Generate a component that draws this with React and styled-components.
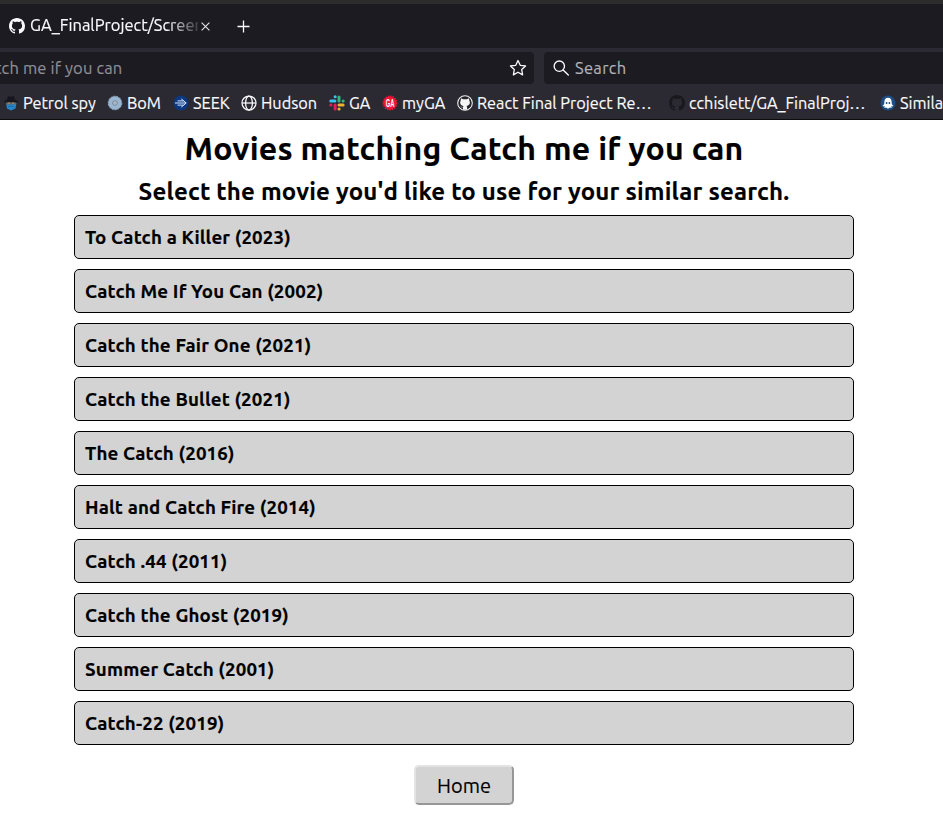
import React from "react";
import styled, { createGlobalStyle } from "styled-components";

const GlobalStyle = createGlobalStyle`
  * { box-sizing: border-box; }
  body { margin: 0; background: #fff; overflow: hidden; font-family: Ubuntu, "Noto Sans", sans-serif; }
  h1, h2, p { margin: 0; }
`;

const Text = styled.span`
  white-space: pre;
  letter-spacing: ${(p) => p.$spacing || 0}px;
`;

const Window = styled.div`
  width: 943px;
  height: 823px;
  overflow: hidden;
  background: #fff;
`;
const Chrome = styled.header`
  height: 120px;
  background: #2b2a33;
  border-bottom: 1px solid #0c0c0d;
  color: #fbfbfe;
  font-size: 16.5px;
  -webkit-text-stroke: 0.15px currentColor;
  overflow: hidden;
`;
const TabBar = styled.div`
  height: 48px;
  border-top: 4px solid #2c2c2c;
  background: #1c1b22;
  display: flex;
  align-items: center;
  padding-left: 9px;
`;
const TabTitle = styled.div`
  width: 168px;
  margin: -2px 3px 0 5px;
  line-height: 24px;
  overflow: hidden;
  mask-image: linear-gradient(to right, #000 136px, transparent 174px);
`;
const TabIcon = styled.svg`
  flex: none;
  margin-right: ${(p) => p.$gap || 0}px;
`;
const NavBar = styled.div`
  height: 36px;
  padding-top: 4px;
  display: flex;
  gap: 10px;
`;
const Field = styled.div`
  height: 32px;
  display: flex;
  align-items: center;
  background: #1c1b22;
  line-height: 31px;
`;
const AddressField = styled(Field)`
  width: 534px;
  border-radius: 0 4px 4px 0;
  justify-content: space-between;
  padding-right: 7px;
  color: #8f8f95;
`;
const AddressText = styled.div`
  margin-left: -5px;
`;
const SearchField = styled(Field)`
  flex: 1;
  border-radius: 4px 0 0 4px;
  padding-left: 8px;
  gap: 5px;
  color: #b3b3b8;
`;
const Bookmarks = styled.nav`
  height: 35px;
  display: flex;
  padding: 2px 0 0 3px;
  font-size: 16.3px;
`;
const Bookmark = styled.div`
  flex: none;
  width: ${(p) => p.$width}px;
  height: 34px;
  display: flex;
  align-items: center;
  gap: 4px;
  line-height: 34px;
  padding-bottom: 1px;
  svg { flex: none; }
`;
const Page = styled.main`
  width: 928px;
  display: flex;
  flex-direction: column;
  align-items: center;
  color: #000;
  -webkit-text-stroke: 0.15px currentColor;
`;
const Title = styled.h1`
  margin-top: 8px;
  font-size: 32px;
  line-height: 40px;
  height: 40px;
  letter-spacing: 0.22px;
`;
const Subtitle = styled.h2`
  margin-top: 9px;
  font-size: 24px;
  line-height: 30px;
  height: 30px;
  letter-spacing: 0.19px;
`;
const MovieList = styled.div`
  width: 780px;
  margin-top: 8px;
  display: flex;
  flex-direction: column;
  gap: 10px;
`;
const Movie = styled.div`
  height: 44px;
  border: 1px solid #000;
  border-radius: 5px;
  background: #d3d3d3;
  padding-left: 10px;
  font-size: 18.72px;
  font-weight: 700;
  line-height: 43px;
  letter-spacing: 0.16px;
`;
const HomeButton = styled.button`
  margin-top: 20px;
  width: 100px;
  height: 40px;
  padding: 2px 0 0;
  border: 2px solid;
  border-color: #e3e3e3 #979797 #979797 #e3e3e3;
  border-radius: 5px;
  background: #d3d3d3;
  color: #000;
  font-family: inherit;
  font-size: 20px;
  line-height: 34px;
`;

const OCTOCAT =
  "M8 0C3.58 0 0 3.58 0 8c0 3.54 2.29 6.53 5.47 7.59.4.07.55-.17.55-.38 0-.19-.01-.82-.01-1.49-2.01.37-2.53-.49-2.69-.94-.09-.23-.48-.94-.82-1.13-.28-.15-.68-.52-.01-.53.63-.01 1.08.58 1.23.82.72 1.21 1.87.87 2.33.66.07-.52.28-.87.51-1.07-1.78-.2-3.64-.89-3.64-3.95 0-.87.31-1.59.82-2.15-.08-.2-.36-1.02.08-2.12 0 0 .67-.21 2.2.82.64-.18 1.32-.27 2-.27s1.36.09 2 .27c1.53-1.04 2.2-.82 2.2-.82.44 1.1.16 1.92.08 2.12.51.56.82 1.27.82 2.15 0 3.07-1.87 3.75-3.65 3.95.29.25.54.73.54 1.48 0 1.07-.01 1.93-.01 2.2 0 .21.15.46.55.38A8.01 8.01 0 0 0 16 8c0-4.42-3.58-8-8-8z";

const Svg16 = (props) => <svg width="16" height="16" viewBox="0 0 16 16" fill="none" {...props} />;

const SpyIcon = () => (
  <Svg16>
    <path d="M3 8h10.5l-1 5.5L8 15.5 4 13.5z" fill="#2587c9" />
    <path d="M3.5 6.8h9v2.7h-9z" fill="#65635f" />
    <path d="M5 8h2M9 8h2" stroke="#c1a17c" />
    <path d="M4.2 4.5 5 1 8 1.8l3-.8.8 3.5 3 1.8v.9H1.2v-.9z" fill="#17151d" />
    <path d="m5 12 3-1 3 1" stroke="#1769a4" />
  </Svg16>
);
const BomIcon = () => (
  <Svg16>
    <circle cx="8" cy="8" r="6.8" fill="#9ab5cf" stroke="#8ba8c4" strokeDasharray="2 1" />
    <circle cx="8" cy="8" r="2.2" fill="#d3dce4" stroke="#677c91" />
    <circle cx="8" cy="8" r=".7" fill="#647487" />
  </Svg16>
);
const SeekIcon = () => (
  <Svg16>
    <circle cx="8" cy="8" r="7.5" fill="#0d3880" />
    <path d="M2 8h11M4.5 5.9h6M4.5 10.1h6M8.2 3.8 13.2 8l-5 4.2" stroke="#d8e8ff" strokeWidth="1" />
  </Svg16>
);
const GlobeIcon = () => (
  <Svg16 stroke="#fbfbfe" strokeWidth="1.25">
    <circle cx="8" cy="8" r="7" />
    <ellipse cx="8" cy="8" rx="3.4" ry="7" />
    <path d="M1.2 8h13.6" />
  </Svg16>
);
const SlackIcon = () => (
  <Svg16 strokeWidth="3" strokeLinecap="round">
    <path d="M1.8 6.1h4.1M6.1 1.8h.1" stroke="#36c5f0" />
    <path d="M10 1.9v4.2M14.1 6.1h.1" stroke="#2eb67d" />
    <path d="M10 10h4.1M10 14.1h.1" stroke="#ecb22e" />
    <path d="M6.1 10v4.1M1.8 10h.1" stroke="#e01e5a" />
  </Svg16>
);
const BadgeText = styled.text`
  font: 700 11px "Liberation Sans", sans-serif;
`;
const MyGaIcon = () => (
  <Svg16>
    <circle cx="8" cy="8" r="6.5" fill="#ed1837" stroke="#ed1837" strokeWidth="2" strokeDasharray="1.3 1" />
    <BadgeText x="3.7" y="12" fill="#fff" textLength="8.6" lengthAdjust="spacingAndGlyphs">GA</BadgeText>
  </Svg16>
);
const RingCatIcon = () => (
  <Svg16>
    <circle cx="8" cy="8" r="7.3" fill="#25242a" stroke="#f1f1f1" strokeWidth="1.1" />
    <path d="M4 3.2 6.2 4.2h3.6L12 3.2l.3 2.4c1.6 3-.2 5-2.8 5.5l.6 1v2.6H6v-2C4.3 13 4.2 11.7 3.3 11.3c1.2-.2 1.6 1.4 2.7 1.1l.4-1.3C3.8 10.6 2.3 8.4 3.7 5.6z" fill="#f6f6f6" />
  </Svg16>
);
const DarkCatIcon = () => (
  <Svg16><path d={OCTOCAT} fill="#19181d" /></Svg16>
);
const OctopusIcon = () => (
  <Svg16>
    <circle cx="8" cy="8" r="7.5" fill="#1c4f86" />
    <path d="M4.3 7.5C4.3 4.5 5.5 2.8 8 2.8s3.7 1.7 3.7 4.7c0 2 .5 2.5 1.7 3.1-.6 1-1.5 1-2.3.5l.6 2-1.8-.6L8 13.8l-1.9-1.3-1.8.6.6-2c-.9.5-1.8.5-2.3-.5 1.2-.6 1.7-1.1 1.7-3.1z" fill="#fff" />
    <circle cx="6.6" cy="8" r=".9" fill="#164779" />
    <circle cx="9.4" cy="8" r=".9" fill="#164779" />
  </Svg16>
);

const bookmarks = [
  { label: "Petrol spy", width: 104, Icon: SpyIcon },
  { label: "BoM", width: 66, Icon: BomIcon },
  { label: "SEEK", width: 68, Icon: SeekIcon },
  { label: "Hudson", width: 88, Icon: GlobeIcon },
  { label: "GA", width: 53, Icon: SlackIcon },
  { label: "myGA", width: 75, Icon: MyGaIcon },
  { label: "React Final Project Re…", width: 212, Icon: RingCatIcon },
  { label: "cchislett/GA_FinalProj…", width: 211, Icon: DarkCatIcon },
  { label: "Similar", width: 80, Icon: OctopusIcon },
];

const movies = [
  "To Catch a Killer (2023)",
  "Catch Me If You Can (2002)",
  "Catch the Fair One (2021)",
  "Catch the Bullet (2021)",
  "The Catch (2016)",
  "Halt and Catch Fire (2014)",
  "Catch .44 (2011)",
  "Catch the Ghost (2019)",
  "Summer Catch (2001)",
  "Catch-22 (2019)",
];

export default function App() {
  return (
    <Window>
      <GlobalStyle />
      <Chrome>
        <TabBar>
          <TabIcon width="16" height="16" viewBox="0 0 16 16"><path d={OCTOCAT} fill="#fbfbfe" /></TabIcon>
          <TabTitle><Text>GA_FinalProject/Screens</Text></TabTitle>
          <TabIcon $gap={27} width="9" height="9" viewBox="0 0 9 9" stroke="#e4e4e8" strokeWidth="1.1">
            <path d="m.6.6 7.8 7.8M8.4.6.6 8.4" />
          </TabIcon>
          <TabIcon width="13" height="13" viewBox="0 0 13 13" stroke="#fbfbfe" strokeWidth="1.3">
            <path d="M6.5.5v12M.5 6.5h12" />
          </TabIcon>
        </TabBar>
        <NavBar>
          <AddressField>
            <AddressText><Text $spacing={0.15}>tch me if you can</Text></AddressText>
            <Svg16 width="18" height="18" stroke="#fbfbfe" strokeWidth="1.15" strokeLinejoin="round">
              <path d="m8 1.3 2 4.3 4.7.6-3.4 3.2.8 4.7L8 11.8l-4.1 2.3.8-4.7L1.3 6.2 6 5.6z" />
            </Svg16>
          </AddressField>
          <SearchField>
            <Svg16 width="18" height="18" stroke="#fbfbfe" strokeWidth="1.2" strokeLinecap="round">
              <circle cx="6.5" cy="6.4" r="4.6" />
              <path d="m9.9 9.8 4.6 4.5" />
            </Svg16>
            <Text $spacing={0.3}>Search</Text>
          </SearchField>
        </NavBar>
        <Bookmarks>
          {bookmarks.map(({ label, width, Icon }) => (
            <Bookmark key={label} $width={width}>
              <Icon />
              <Text>{label}</Text>
            </Bookmark>
          ))}
        </Bookmarks>
      </Chrome>
      <Page>
        <Title>Movies matching Catch me if you can</Title>
        <Subtitle>Select the movie you'd like to use for your similar search.</Subtitle>
        <MovieList>
          {movies.map((name) => <Movie key={name}>{name}</Movie>)}
        </MovieList>
        <HomeButton>Home</HomeButton>
      </Page>
    </Window>
  );
}
